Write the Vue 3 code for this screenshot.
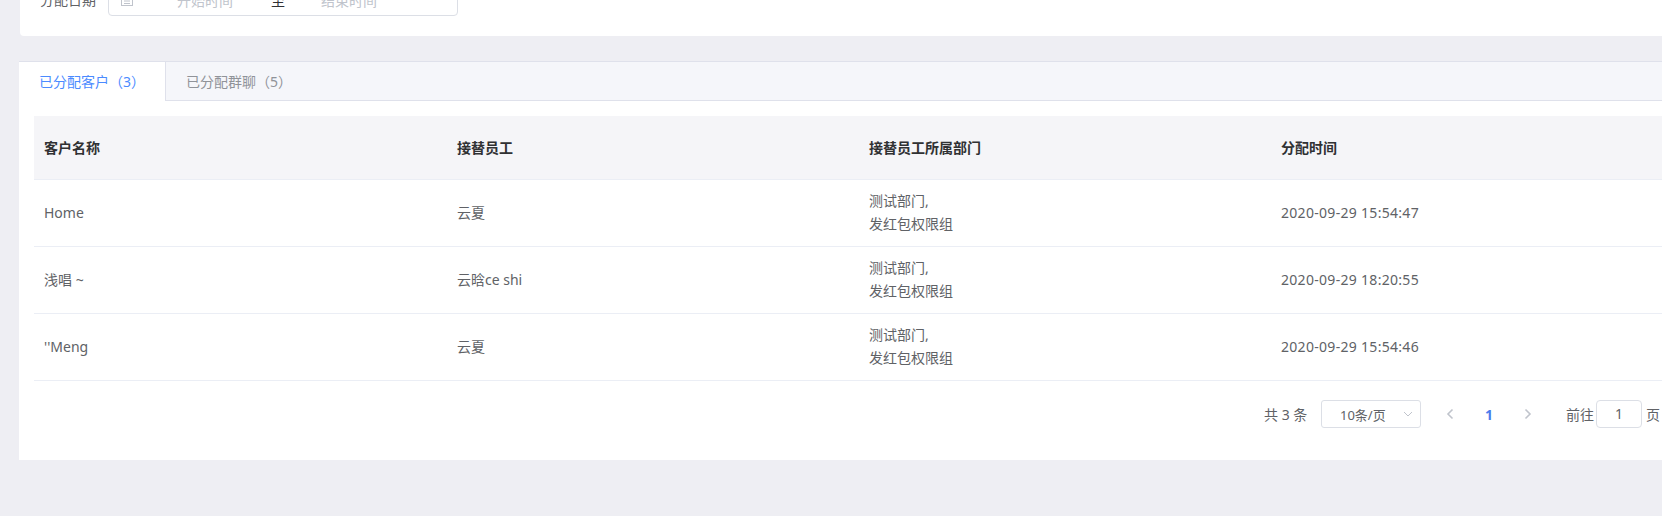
<template>
  <div class="page">
    <!-- filter card, scrolled mostly out of view -->
    <div class="filter-card">
      <span class="filter-label">分配日期</span>
      <div class="date-range">
        <svg class="date-icon" viewBox="0 0 14 14" fill="none" stroke="#c0c4cc" stroke-width="1">
          <rect x="1.5" y="2.5" width="11" height="10" />
          <path d="M1.5 5.5h11M4.5 1v3M9.5 1v3M4 8h6M4 10.5h6" />
        </svg>
        <span class="date-text">开始时间</span>
        <span class="date-sep">至</span>
        <span class="date-text">结束时间</span>
      </div>
    </div>

    <div class="list-card">
      <div class="tabs">
        <div
          v-for="(tab, i) in tabs"
          :key="tab"
          :class="['tab', { active: i === 0 }]"
        >{{ tab }}</div>
      </div>

      <div class="table">
        <div class="row head">
          <div v-for="h in heads" :key="h" class="cell">{{ h }}</div>
        </div>
        <div v-for="r in rows" :key="r.name" class="row">
          <div class="cell">{{ r.name }}</div>
          <div class="cell">{{ r.staff }}</div>
          <div class="cell dept">测试部门,<br />发红包权限组</div>
          <div class="cell time">{{ r.time }}</div>
        </div>
      </div>

      <div class="pager">
        <span class="total">共 3 条</span>
        <div class="size-select">
          <span>10条/页</span>
          <svg class="size-arrow" viewBox="0 0 10 6" fill="none" stroke="#c0c4cc" stroke-width="1">
            <path d="M1 1l4 4 4-4" />
          </svg>
        </div>
        <svg class="nav prev" viewBox="0 0 8 12" fill="none" stroke="#c0c4cc" stroke-width="1.6">
          <path d="M6.5 1.5L2 6l4.5 4.5" />
        </svg>
        <span class="current">1</span>
        <svg class="nav next" viewBox="0 0 8 12" fill="none" stroke="#c0c4cc" stroke-width="1.6">
          <path d="M1.5 1.5L6 6l-4.5 4.5" />
        </svg>
        <span class="jump">前往</span>
        <div class="jump-input">1</div>
        <span class="jump-unit">页</span>
      </div>
    </div>
  </div>
</template>

<script setup>
const tabs = ['已分配客户（3）', '已分配群聊（5）']
const heads = ['客户名称', '接替员工', '接替员工所属部门', '分配时间']
const rows = [
  { name: 'Home', staff: '云夏', time: '2020-09-29 15:54:47' },
  { name: '浅唱 ~', staff: '云晗ce shi', time: '2020-09-29 18:20:55' },
  { name: '\'\'Meng', staff: '云夏', time: '2020-09-29 15:54:46' }
]
</script>

<style>
html,
body {
  margin: 0;
  overflow: hidden;
}
</style>

<style scoped>
.page {
  width: 1662px;
  height: 516px;
  overflow: hidden;
  background: #eeeef3;
  font-family: "Noto Sans", "Noto Sans CJK SC", sans-serif;
  font-size: 14px;
  color: #606266;
}

.filter-card {
  display: flex;
  height: 32px;
  margin: -16px 0 0 20px;
  padding-bottom: 20px;
  background: #fff;
  border-radius: 0 0 0 4px;
}

.filter-label {
  width: 88px;
  padding-left: 20px;
  box-sizing: border-box;
  line-height: 32px;
}

.date-range {
  display: flex;
  align-items: center;
  width: 350px;
  height: 32px;
  box-sizing: border-box;
  border: 1px solid #dcdfe6;
  border-radius: 4px;
  color: #c0c4cc;
}

.date-icon {
  width: 14px;
  height: 14px;
  margin-left: 11px;
}

.date-text {
  width: 122px;
  margin-left: 10px;
  text-align: center;
}

.date-sep {
  margin: 0 -7px 0 5px;
  color: #303133;
}

.list-card {
  margin: 25px 0 0 19px;
  height: 399px;
  background: #fff;
}

.tabs {
  display: flex;
  height: 40px;
  box-sizing: border-box;
  background: #f5f6fa;
  border-top: 1px solid #dfe1eb;
  border-bottom: 1px solid #dfe1eb;
}

.tab {
  width: 147px;
  padding-left: 20px;
  box-sizing: border-box;
  line-height: 39px;
  color: #909399;
  border-right: 1px solid #dfe1eb;
}

.tab + .tab {
  border-right: 0;
  width: auto;
  padding-left: 20px;
}

.tab.active {
  height: 39px;
  background: #fff;
  color: #4b8bff;
}

.table {
  margin: 15px 0 0 15px;
}

.row {
  display: grid;
  grid-template-columns: 413px 412px 412px 1fr;
  height: 67px;
  align-items: center;
  box-sizing: border-box;
  border-bottom: 1px solid #ebeef5;
}

.row.head {
  height: 64px;
  background: #f5f5f8;
  font-weight: 700;
  color: #303133;
}

.cell {
  padding: 0 10px 2px;
}

.dept {
  line-height: 23px;
}

.time {
  letter-spacing: 0.3px;
}

.pager {
  display: flex;
  align-items: center;
  height: 28px;
  margin-top: 19px;
  padding-left: 1245px;
  font-size: 13px;
}

.total {
  width: 57px;
  font-size: 14px;
}

.size-select {
  display: flex;
  align-items: center;
  justify-content: space-between;
  width: 100px;
  height: 28px;
  padding: 0 7px 0 18px;
  box-sizing: border-box;
  border: 1px solid #dcdfe6;
  border-radius: 3px;
}

.size-arrow {
  width: 10px;
  height: 6px;
}

.nav {
  width: 8px;
  height: 12px;
}

.prev {
  margin-left: 25px;
}

.current {
  width: 70px;
  text-align: center;
  font-weight: 700;
  font-size: 14px;
  color: #4b7bec;
}

.jump {
  margin-left: 34px;
  font-size: 14px;
}

.jump-input {
  width: 46px;
  height: 28px;
  margin-left: 2px;
  box-sizing: border-box;
  border: 1px solid #dcdfe6;
  border-radius: 4px;
  text-align: center;
  line-height: 26px;
  font-size: 14px;
}

.jump-unit {
  margin-left: 4px;
  font-size: 14px;
}
</style>
